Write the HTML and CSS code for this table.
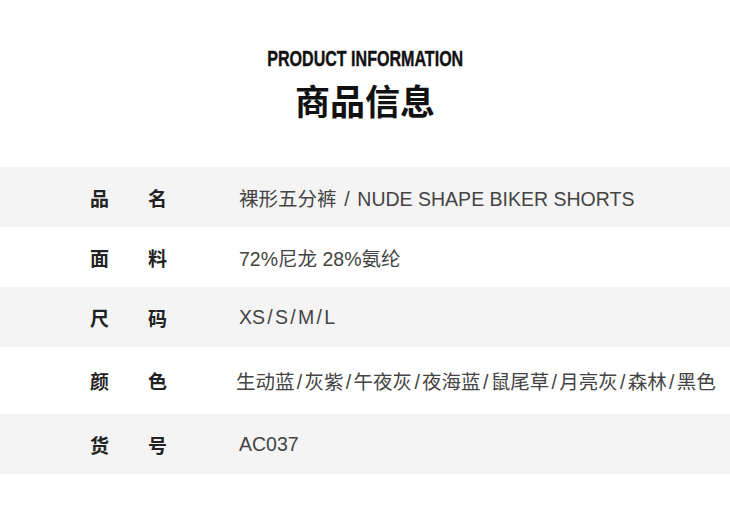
FILE: index.html
```html
<!DOCTYPE html>
<html lang="zh-CN">
<head>
<meta charset="utf-8">
<title>商品信息</title>
<link rel="stylesheet" href="styles.css">
</head>
<body>
<header class="head">
  <h2 class="en"><span class="en-text">PRODUCT INFORMATION</span></h2>
  <h1 class="cn">商品信息</h1>
</header>
<div class="table">
  <div class="row gray"><div class="label"><span>品</span><span>名</span></div><div class="value">裸形五分裤 <span class="sep">/</span> NUDE SHAPE BIKER SHORTS</div></div>
  <div class="row"><div class="label"><span>面</span><span>料</span></div><div class="value">72%尼龙 28%氨纶</div></div>
  <div class="row gray"><div class="label"><span>尺</span><span>码</span></div><div class="value">XS<span class="sep">/</span>S<span class="sep">/</span>M<span class="sep">/</span>L</div></div>
  <div class="row tall"><div class="label"><span>颜</span><span>色</span></div><div class="value colors">生动蓝<span class="sep">/</span>灰紫<span class="sep">/</span>午夜灰<span class="sep">/</span>夜海蓝<span class="sep">/</span>鼠尾草<span class="sep">/</span>月亮灰<span class="sep">/</span>森林<span class="sep">/</span>黑色</div></div>
  <div class="row gray"><div class="label"><span>货</span><span>号</span></div><div class="value">AC037</div></div>
</div>
</body>
</html>
```
FILE: styles.css
```css
html, body {
  margin: 0;
  padding: 0;
  background: #fff;
}
body {
  width: 730px;
  height: 514px;
  overflow: hidden;
  font-family: "Liberation Sans", "Noto Sans CJK SC", sans-serif;
  color: #222;
}
.head {
  display: flex;
  flex-direction: column;
  align-items: center;
  padding-top: 46px;
}
.en {
  margin: 0;
  font-family: "Liberation Sans", sans-serif;
  font-weight: 700;
  font-size: 22px;
  line-height: 26px;
  color: #111;
  white-space: nowrap;
}
.en-text {
  display: inline-block;
  transform: scaleX(0.73);
  -webkit-text-stroke: 0.4px #111;
}
.cn {
  margin: 6px 0 0;
  font-family: "Noto Sans CJK SC", sans-serif;
  font-weight: 700;
  font-size: 35px;
  line-height: 44px;
  color: #111;
}
.table {
  margin-top: 45px;
  display: flex;
  flex-direction: column;
}
.row {
  display: flex;
  align-items: center;
  height: 60px;
}
.row.gray { background: #f4f4f4; }
.row.tall { height: 67px; }
.label {
  width: 239px;
  flex: none;
  display: flex;
  padding-left: 90px;
  box-sizing: border-box;
  gap: 39px;
  font-family: "Noto Sans CJK SC", sans-serif;
  font-weight: 700;
  font-size: 19px;
  color: #222;
}
.value {
  font-size: 19.5px;
  color: #444;
  white-space: nowrap;
}
.sep {
  margin: 0 2.3px;
}
.value.colors { margin-left: -3px; }
```
